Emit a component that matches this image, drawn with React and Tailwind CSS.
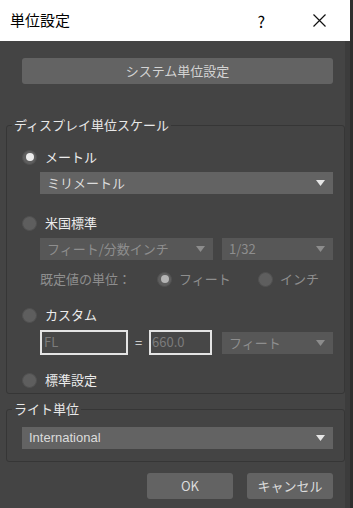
import React from 'react';

const font = { fontFamily: '"Noto Sans CJK JP", "Liberation Sans", sans-serif' };

const Radio = ({ checked, disabled }) => (
  <span className="w-[15px] h-[15px] rounded-full bg-[#5e5e5e] flex items-center justify-center shrink-0 border border-[#505050]">
    {checked && <span className={`w-[8px] h-[8px] rounded-full ${disabled ? 'bg-[#b4b4b4]' : 'bg-[#ececec]'}`} />}
  </span>
);

const Caret = ({ dim }) => (
  <svg width="9" height="6" viewBox="0 0 9 6" className="shrink-0">
    <path d="M0 0 L9 0 L4.5 6 Z" fill={dim ? '#8c8c8c' : '#e6e6e6'} />
  </svg>
);

const Select = ({ label, dim, className }) => (
  <div className={`h-[22px] flex items-center justify-between pl-[7px] pr-[8px] text-[13px] ${dim ? 'bg-[#575757] text-[#8e8e8e]' : 'bg-[#636363] text-[#dcdcdc]'} ${className}`}>
    <span>{label}</span>
    <Caret dim={dim} />
  </div>
);

const Group = ({ title, children, className }) => (
  <div className={`relative border border-[#363636] rounded-[3px] ${className}`}>
    <span className="absolute -top-[10px] left-[5px] bg-[#444444] px-[2px] text-[13px] text-[#e8e8e8] leading-[18px]">{title}</span>
    {children}
  </div>
);

export default function App() {
  return (
    <div className="w-[353px] h-[508px] bg-[#2e2e2e] flex overflow-hidden" style={font}>
      <div className="w-[350px] h-full flex flex-col">
        {/* title bar */}
        <div className="h-[41px] bg-white flex items-center pl-[10px] text-black shrink-0">
          <span className="text-[15px]">単位設定</span>
          <span className="ml-auto text-[16px] mr-[48px]">?</span>
          <svg width="13" height="13" viewBox="0 0 13 13" className="mr-[24px]">
            <path d="M0.5 0.5 L12.5 12.5 M12.5 0.5 L0.5 12.5" stroke="#111" strokeWidth="1.2" />
          </svg>
        </div>
        <div className="flex-1 flex">
          <div className="w-[345px] bg-[#444444] flex flex-col pt-[17px] pl-[6px]">
            <div className="ml-[16px] mr-[12px] h-[26px] rounded-[3px] bg-[#636363] flex items-center justify-center text-[13px] text-[#d4d4d4]">
              システム単位設定
            </div>

            <Group title="ディスプレイ単位スケール" className="mt-[41px] h-[269px] pt-[22px]">
              <div className="flex items-center gap-[8px] pl-[15px] text-[13px] text-[#ececec] h-[18px]">
                <Radio checked />
                <span>メートル</span>
              </div>
              <Select label="ミリメートル" className="ml-[33px] mr-[11px] mt-[6px]" />

              <div className="flex items-center gap-[8px] pl-[15px] text-[13px] text-[#ececec] h-[18px] mt-[20px]">
                <Radio />
                <span>米国標準</span>
              </div>
              <div className="flex ml-[33px] mr-[11px] mt-[6px] gap-[9px]">
                <Select label="フィート/分数インチ" dim className="w-[173px]" />
                <Select label="1/32" dim className="flex-1" />
              </div>
              <div className="flex items-center ml-[33px] mt-[10px] h-[18px] text-[13px] text-[#8e8e8e]">
                <span className="w-[117px]">既定値の単位：</span>
                <Radio checked disabled />
                <span className="ml-[7px] w-[79px]">フィート</span>
                <Radio />
                <span className="ml-[7px]">インチ</span>
              </div>

              <div className="flex items-center gap-[8px] pl-[15px] text-[13px] text-[#ececec] h-[18px] mt-[18px]">
                <Radio />
                <span>カスタム</span>
              </div>
              <div className="flex items-center ml-[33px] mr-[11px] mt-[6px]">
                <div className="w-[88px] h-[25px] border-2 border-[#e4e4e4] bg-[#474747] text-[13px] text-[#7c7c7c] pl-[2px] leading-[20px]">FL</div>
                <span className="w-[21px] text-center text-[13px] text-[#e4e4e4]">=</span>
                <div className="w-[63px] h-[25px] border-2 border-[#e4e4e4] bg-[#474747] text-[13px] text-[#7c7c7c] pl-[1px] leading-[20px]">660.0</div>
                <Select label="フィート" dim className="flex-1 ml-[10px]" />
              </div>

              <div className="flex items-center gap-[8px] pl-[15px] text-[13px] text-[#ececec] h-[18px] mt-[16px]">
                <Radio />
                <span>標準設定</span>
              </div>
            </Group>

            <Group title="ライト単位" className="mt-[15px] h-[53px] pt-[17px]">
              <Select label="International" className="ml-[15px] mr-[11px] font-['Liberation_Sans']" />
            </Group>

            <div className="flex justify-end gap-[14px] mt-[11px] mr-[12px]">
              <div className="w-[86px] h-[26px] rounded-[3px] bg-[#636363] flex items-center justify-center text-[13px] text-[#dcdcdc]">OK</div>
              <div className="w-[86px] h-[26px] rounded-[3px] bg-[#636363] flex items-center justify-center text-[13px] text-[#dcdcdc]">キャンセル</div>
            </div>
          </div>
          <div className="w-[5px] bg-[#3c3c3c]" />
        </div>
      </div>
    </div>
  );
}
